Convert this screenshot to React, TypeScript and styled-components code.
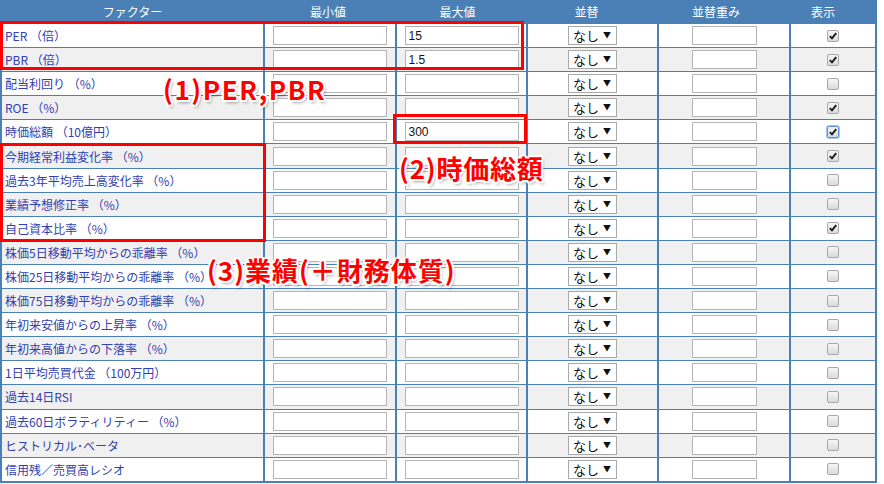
import React from "react";
import styled, { createGlobalStyle, css } from "styled-components";

const GlobalStyle = createGlobalStyle`
  html, body {
    margin: 0;
    padding: 0;
    background: #ffffff;
  }
  body {
    font-family: "Noto Sans CJK JP", "Noto Sans", sans-serif;
  }
`;

const BLUE = "#4a80b6";

const Wrapper = styled.div`
  position: relative;
  width: 884px;
  height: 484px;
  overflow: hidden;
`;

const Table = styled.div`
  width: 877px;
  display: flex;
  flex-direction: column;
  row-gap: 1px;
  background: ${BLUE};
  padding: 0 2px 2px 2px;
  box-sizing: border-box;
`;

const Row = styled.div<{ $head?: boolean; $shade?: boolean }>`
  display: grid;
  grid-template-columns: 261px 130px 129px 129px 130px 84px;
  column-gap: ${(p) => (p.$head ? "0" : "2px")};
  height: ${(p) => (p.$head ? "23px" : "23.1px")};
  background: ${BLUE};

  & > div {
    background: ${(p) => (p.$head ? BLUE : p.$shade ? "#f0f0f0" : "#ffffff")};
  }
`;

const HeadCell = styled.div`
  display: flex;
  align-items: center;
  justify-content: center;
  color: #ffffff;
  font-size: 12px;
  padding-bottom: 1px;
`;

const LabelCell = styled.div`
  display: flex;
  align-items: center;
  padding-left: 3px;
  color: #3040b0;
  font-size: 12px;
  white-space: nowrap;
`;

const Cell = styled.div`
  display: flex;
  align-items: center;
  justify-content: center;
`;

const TextBox = styled.div<{ $w: number }>`
  width: ${(p) => p.$w}px;
  height: 19px;
  box-sizing: border-box;
  border: 1px solid #b4b4b4;
  background: #ffffff;
  font-family: "Liberation Sans", Arial, sans-serif;
  font-size: 12px;
  color: #111111;
  display: flex;
  align-items: center;
  padding-left: 3px;
`;

const Select = styled.div`
  width: 49px;
  height: 19px;
  box-sizing: border-box;
  border: 1px solid #a9a9a9;
  background: #ffffff;
  display: flex;
  align-items: center;
  justify-content: space-between;
  padding: 0 5px 0 4px;
  font-size: 13px;
  color: #111111;

  span:last-child {
    font-size: 8px;
    margin-top: -2px;
  }
`;

const Check = styled.div<{ $focus?: boolean }>`
  width: 12px;
  height: 12px;
  box-sizing: border-box;
  border: 1px solid #a8a8a8;
  border-radius: 2px;
  background: linear-gradient(#f6f6f6, #dadada);
  display: flex;
  align-items: center;
  justify-content: center;
  ${(p) =>
    p.$focus &&
    css`
      border-color: #5a8fd8;
      box-shadow: 0 0 0 1px #a9c6f0;
    `}
`;

const Box = styled.div<{ $x: number; $y: number; $w: number; $h: number }>`
  position: absolute;
  left: ${(p) => p.$x}px;
  top: ${(p) => p.$y}px;
  width: ${(p) => p.$w}px;
  height: ${(p) => p.$h}px;
  box-sizing: border-box;
  border: 3px solid #ff0000;
`;

const Note = styled.div<{ $x: number; $y: number; $ls: number }>`
  position: absolute;
  left: ${(p) => p.$x}px;
  top: ${(p) => p.$y}px;
  font-family: "Noto Sans CJK JP", "Noto Sans", sans-serif;
  font-weight: 700;
  font-size: 26px;
  line-height: 1;
  letter-spacing: ${(p) => p.$ls}px;
  color: #ff0000;
  white-space: nowrap;
  text-shadow: 2px 0 0 #fff, -2px 0 0 #fff, 0 2px 0 #fff, 0 -2px 0 #fff,
    1.5px 1.5px 0 #fff, -1.5px 1.5px 0 #fff, 1.5px -1.5px 0 #fff,
    -1.5px -1.5px 0 #fff, 2px 3px 3px rgba(0, 0, 0, 0.35);
`;

const Tick = () => (
  <svg width="8" height="8" viewBox="0 0 8 8">
    <path d="M0.8 4.2 L3 6.4 L7.2 1.2" fill="none" stroke="#1a1a1a" strokeWidth="1.9" />
  </svg>
);

interface Factor {
  label: string;
  max?: string;
  on?: boolean;
  focus?: boolean;
}

const factors: Factor[] = [
  { label: "PER （倍）", max: "15", on: true },
  { label: "PBR （倍）", max: "1.5", on: true },
  { label: "配当利回り （%）" },
  { label: "ROE （%）", on: true },
  { label: "時価総額 （10億円）", max: "300", on: true, focus: true },
  { label: "今期経常利益変化率 （%）", on: true },
  { label: "過去3年平均売上高変化率 （%）" },
  { label: "業績予想修正率 （%）" },
  { label: "自己資本比率 （%）", on: true },
  { label: "株価5日移動平均からの乖離率 （%）" },
  { label: "株価25日移動平均からの乖離率 （%）" },
  { label: "株価75日移動平均からの乖離率 （%）" },
  { label: "年初来安値からの上昇率 （%）" },
  { label: "年初来高値からの下落率 （%）" },
  { label: "1日平均売買代金 （100万円）" },
  { label: "過去14日RSI" },
  { label: "過去60日ボラティリティー （%）" },
  { label: "ヒストリカル･ベータ" },
  { label: "信用残／売買高レシオ" },
];

const heads = ["ファクター", "最小値", "最大値", "並替", "並替重み", "表示"];

export default function App() {
  return (
    <>
      <GlobalStyle />
      <Wrapper>
        <Table>
          <Row $head>
            {heads.map((h) => (
              <HeadCell key={h}>{h}</HeadCell>
            ))}
          </Row>
          {factors.map((f, i) => (
            <Row key={f.label} $shade={i % 2 === 1}>
              <LabelCell>{f.label}</LabelCell>
              <Cell>
                <TextBox $w={114} />
              </Cell>
              <Cell>
                <TextBox $w={114}>{f.max}</TextBox>
              </Cell>
              <Cell>
                <Select>
                  <span>なし</span>
                  <span>▼</span>
                </Select>
              </Cell>
              <Cell>
                <TextBox $w={65} />
              </Cell>
              <Cell>
                <Check $focus={f.focus}>{f.on && <Tick />}</Check>
              </Cell>
            </Row>
          ))}
        </Table>

        <Box $x={0} $y={21} $w={524} $h={49} />
        <Box $x={393} $y={114} $w={134} $h={30} />
        <Box $x={0} $y={143} $w={266} $h={99} />

        <Note $x={163} $y={76} $ls={1.6}>(1)PER,PBR</Note>
        <Note $x={399} $y={155} $ls={0.8}>(2)時価総額</Note>
        <Note $x={207} $y={257} $ls={1}>(3)業績(＋財務体質)</Note>
      </Wrapper>
    </>
  );
}
